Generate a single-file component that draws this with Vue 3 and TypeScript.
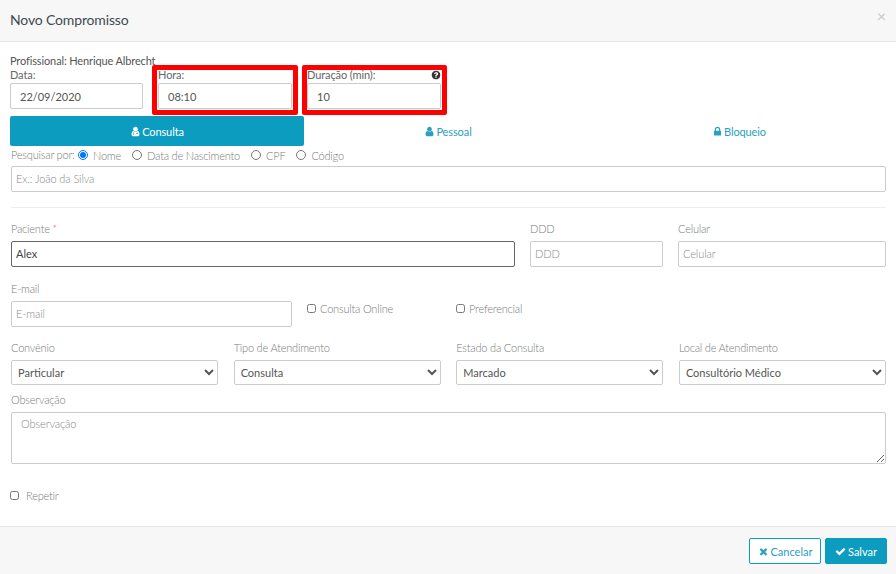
<script setup lang="ts">
const icons: Record<string, string> = {
  check: 'M1671 566q0 40-28 68l-724 724-136 136q-28 28-68 28t-68-28l-136-136-362-362q-28-28-28-68t28-68l136-136q28-28 68-28t68 28l294 295 656-657q28-28 68-28t68 28l136 136q28 28 28 68z',
  times: 'M1490 1322q0 40-28 68l-136 136q-28 28-68 28t-68-28l-294-294-294 294q-28 28-68 28t-68-28l-136-136q-28-28-28-68t28-68l294-294-294-294q-28-28-28-68t28-68l136-136q28-28 68-28t68 28l294 294 294-294q28-28 68-28t68 28l136 136q28 28 28 68t-28 68l-294 294 294 294q28 28 28 68z',
  user: 'M1536 1399q0 109-62.5 187t-150.5 78h-854q-88 0-150.5-78t-62.5-187q0-85 8.5-160.5t31.5-152 58.5-131 94-89 134.5-34.5q131 128 313 128t313-128q76 0 134.5 34.5t94 89 58.5 131 31.5 152 8.5 160.5zm-256-887q0 159-112.5 271.5t-271.5 112.5-271.5-112.5-112.5-271.5 112.5-271.5 271.5-112.5 271.5 112.5 112.5 271.5z',
  lock: 'M640 768h512v-192q0-106-75-181t-181-75-181 75-75 181v192zm832 96v576q0 40-28 68t-68 28h-960q-40 0-68-28t-28-68v-576q0-40 28-68t68-28h32v-192q0-184 132-316t316-132 316 132 132 316v192h32q40 0 68 28t28 68z',
  question: 'M1024 1376v-192q0-14-9-23t-23-9h-192q-14 0-23 9t-9 23v192q0 14 9 23t23 9h192q14 0 23-9t9-23zm256-672q0-88-55.5-163t-138.5-116-170-41q-243 0-371 213-15 24 8 42l132 100q7 6 19 6 16 0 25-12 53-68 86-92 34-24 86-24 48 0 85.5 26t37.5 59q0 38-20 61t-68 45q-63 28-115.5 86.5t-52.5 125.5v36q0 14 9 23t23 9h192q14 0 23-9t9-23q0-19 21.5-49.5t54.5-49.5q32-18 49-28.5t46-35 44.5-48 28-60.5 12.5-81zm384 192q0 209-103 385.5t-279.5 279.5-385.5 103-385.5-103-279.5-279.5-103-385.5 103-385.5 279.5-279.5 385.5-103 385.5 103 279.5 279.5 103 385.5z',
  userMd: 'M1536 1399q0 109-62.5 187t-150.5 78h-854q-88 0-150.5-78t-62.5-187q0-85 8.5-160.5t31.5-152 58.5-131 94-89 134.5-34.5q131 128 313 128t313-128q76 0 134.5 34.5t94 89 58.5 131 31.5 152 8.5 160.5zm-256-887q0 159-112.5 271.5t-271.5 112.5-271.5-112.5-112.5-271.5 112.5-271.5 271.5-112.5 271.5 112.5 112.5 271.5zM576 1000v230a90 90 0 1 0 90 0v-230zM1120 1000v180h-60a50 50 0 0 0-50 50v130h70v-110h160v110h70v-130a50 50 0 0 0-50-50h-60v-180z'
}
const selects = [
  { label: 'Convênio', value: 'Particular' },
  { label: 'Tipo de Atendimento', value: 'Consulta' },
  { label: 'Estado da Consulta', value: 'Marcado' },
  { label: 'Local de Atendimento', value: 'Consultório Médico' }
]
const searchOptions = ['Nome', 'Data de Nascimento', 'CPF', 'Código']
</script>

<template>
  <div class="modal">
    <header class="head">
      <h1>Novo Compromisso</h1>
      <span class="close">×</span>
    </header>

    <main class="body">
      <div class="prof">Profissional: Henrique Albrecht</div>
      <div class="time-row">
        <div class="field">
          <label class="dark">Data:</label>
          <input class="inp big" value="22/09/2020" />
        </div>
        <div class="field">
          <label class="dark">Hora:</label>
          <input class="inp big" value="08:10" />
          <span class="mark mark-a"></span>
        </div>
        <div class="field">
          <label class="dark">Duração (min):</label>
          <svg class="help" viewBox="0 0 1792 1792"><path :d="icons.question" /></svg>
          <input class="inp big" value="10" />
          <span class="mark mark-b"></span>
        </div>
      </div>

      <nav class="tabs">
        <a class="tab active"><svg class="ic" viewBox="0 0 1792 1792"><path fill-rule="evenodd" :d="icons.userMd" /></svg>Consulta</a>
        <a class="tab"><svg class="ic" viewBox="0 0 1792 1792"><path :d="icons.user" /></svg>Pessoal</a>
        <a class="tab"><svg class="ic" viewBox="0 0 1792 1792"><path :d="icons.lock" /></svg>Bloqueio</a>
      </nav>

      <div class="inner">
        <div class="search-by">
          <span class="by">Pesquisar por:</span>
          <label v-for="(o, i) in searchOptions" :key="o" class="radio">
            <input type="radio" name="by" :checked="i === 0" />{{ o }}
          </label>
        </div>
        <input class="inp search" placeholder="Ex.: João da Silva" />
        <hr class="sep" />

        <div class="row-a">
          <div class="field">
            <label>Paciente <em>*</em></label>
            <input class="inp active-inp" value="Alex" />
          </div>
          <div class="field">
            <label>DDD</label>
            <input class="inp" placeholder="DDD" />
          </div>
          <div class="field">
            <label>Celular</label>
            <input class="inp" placeholder="Celular" />
          </div>
        </div>

        <div class="row-b">
          <div class="field email">
            <label>E-mail</label>
            <input class="inp" placeholder="E-mail" />
          </div>
          <label class="check online"><input type="checkbox" />Consulta Online</label>
          <label class="check"><input type="checkbox" />Preferencial</label>
        </div>

        <div class="row-c">
          <div v-for="s in selects" :key="s.label" class="field">
            <label>{{ s.label }}</label>
            <select class="sel"><option>{{ s.value }}</option></select>
          </div>
        </div>

        <div class="field obs">
          <label>Observação</label>
          <textarea class="area" placeholder="Observação"></textarea>
        </div>
      </div>

      <label class="check repeat"><input type="checkbox" />Repetir</label>
    </main>

    <footer class="foot">
      <button class="btn outline"><svg class="ic" viewBox="0 0 1792 1792"><path :d="icons.times" /></svg>Cancelar</button>
      <button class="btn solid"><svg class="ic" viewBox="0 0 1792 1792"><path :d="icons.check" /></svg>Salvar</button>
    </footer>
  </div>
</template>

<style scoped>
.modal {
  width: 896px;
  height: 574px;
  display: flex;
  flex-direction: column;
  background: #fff;
  font-family: Lato, "Open Sans", sans-serif;
  font-size: 11px;
  color: #555;
  overflow: hidden;
}
.head {
  height: 41px;
  flex: none;
  box-sizing: content-box;
  display: flex;
  justify-content: space-between;
  background: #f7f7f7;
  border-bottom: 1px solid #e5e5e5;
  padding: 0 10px;
}
.head h1 {
  margin: 0;
  font-size: 14px;
  font-weight: 400;
  line-height: 40px;
  letter-spacing: -0.15px;
  color: #3f4a50;
}
.close {
  font-size: 16px;
  line-height: 32px;
  color: #c8c8c8;
}
.body {
  flex: 1;
  padding: 11px 10px 0;
}
.prof {
  font-size: 11px;
  line-height: 15px;
  letter-spacing: -0.13px;
  color: #555;
}
.field {
  position: relative;
  display: flex;
  flex-direction: column;
  min-width: 0;
}
.field label {
  font-size: 11px;
  font-weight: 300;
  line-height: 14px;
  height: 14px;
  margin-bottom: 5px;
  letter-spacing: -0.2px;
  color: #7a7a7a;
}
.field label.dark {
  font-weight: 400;
  letter-spacing: -0.1px;
  color: #666;
  margin-bottom: 1px;
}
em {
  font-style: normal;
  color: #e05555;
}
.time-row {
  display: grid;
  grid-template-columns: 133px 134px 134px;
  column-gap: 15px;
}
.inp {
  box-sizing: border-box;
  width: 100%;
  height: 26px;
  border: 1px solid #ccc;
  border-radius: 2px;
  padding: 0 4px 2px;
  font: inherit;
  font-size: 11px;
  color: #555;
  background: #fff;
  outline: none;
}
.inp::placeholder,
.area::placeholder {
  color: #888;
  font-weight: 300;
  letter-spacing: -0.1px;
  opacity: 1;
}
.inp.big {
  padding: 0 9px;
}
.help {
  position: absolute;
  right: 0;
  top: 2px;
  width: 10px;
  height: 10px;
  fill: #333;
}
.mark {
  position: absolute;
  top: -3px;
  bottom: -6px;
  border: 5px solid #f00;
  border-radius: 2px;
  pointer-events: none;
}
.mark-a {
  left: -6px;
  right: -6px;
}
.mark-b {
  left: -5px;
  right: -6px;
}
.tabs {
  display: grid;
  grid-template-columns: 294px 288px 294px;
  margin-top: 7px;
  height: 30px;
}
.tab {
  display: flex;
  align-items: center;
  justify-content: center;
  gap: 1px;
  color: #2a9fc0;
  border-radius: 2px;
  font-size: 11px;
  letter-spacing: -0.1px;
}
.tab.active {
  background: #0c9cc0;
  color: #fff;
}
.ic {
  width: 11px;
  height: 11px;
  fill: currentColor;
  flex: none;
}
.inner {
  padding-left: 1px;
}
.search-by {
  display: flex;
  align-items: center;
  height: 14px;
  margin-top: 2px;
  font-weight: 300;
  letter-spacing: -0.2px;
  color: #7a7a7a;
  font-size: 11px;
}
.by {
  width: 67px;
  flex: none;
  white-space: nowrap;
  position: relative;
  top: -1px;
}
.radio {
  display: flex;
  align-items: center;
  margin-right: 11px;
}
.radio input {
  width: 10px;
  height: 10px;
  margin: 0 5px 0 0;
}
.search {
  display: block;
  margin-top: 4px;
}
.sep {
  border: 0;
  border-top: 1px solid #eee;
  margin: 15px 0 14px;
}
.row-a {
  display: grid;
  grid-template-columns: 504px 133px 208px;
  column-gap: 15px;
}
.row-b {
  display: flex;
  margin-top: 15px;
}
.email {
  width: 281px;
  flex: none;
}
.check {
  display: flex;
  align-items: center;
  font-weight: 300;
  letter-spacing: -0.2px;
  color: #7a7a7a;
  height: 14px;
  font-size: 11px;
}
.check input {
  width: 9px;
  height: 9px;
  margin: 0 4px 0 0;
}
.row-b .check {
  margin-top: 19px;
}
.online {
  margin-left: 15px;
  width: 149px;
}
.row-c {
  display: grid;
  grid-template-columns: repeat(4, 1fr);
  column-gap: 15.5px;
  margin-top: 14px;
}
.sel {
  box-sizing: border-box;
  width: 100%;
  height: 25px;
  border: 1px solid #ccc;
  border-radius: 2px;
  background: #fff;
  font: inherit;
  color: #555;
  padding: 0 2px;
  outline: none;
}
.obs {
  margin-top: 8px;
}
.area {
  box-sizing: border-box;
  width: 100%;
  height: 52px;
  border: 1px solid #ccc;
  border-radius: 2px;
  font: inherit;
  padding: 4px 9px;
  outline: none;
  display: block;
}
.active-inp {
  border-color: #666;
  color: #444;
}
.repeat {
  margin-top: 24px;
}
.repeat input {
  margin-right: 7px;
}
.foot {
  flex: none;
  height: 47px;
  box-sizing: content-box;
  background: #f7f7f7;
  border-top: 1px solid #e5e5e5;
  display: flex;
  justify-content: flex-end;
  align-items: flex-start;
  gap: 4px;
  padding-right: 9px;
}
.btn {
  height: 26px;
  margin-top: 11px;
  display: flex;
  align-items: center;
  justify-content: center;
  gap: 2px;
  border-radius: 2px;
  font: inherit;
  font-size: 11px;
  padding: 0;
}
.outline {
  width: 72px;
  background: #fff;
  border: 1px solid #0c9cc0;
  color: #2a9fc0;
}
.solid {
  width: 62px;
  background: #0c9cc0;
  border: 1px solid #0c9cc0;
  color: #fff;
}
</style>
